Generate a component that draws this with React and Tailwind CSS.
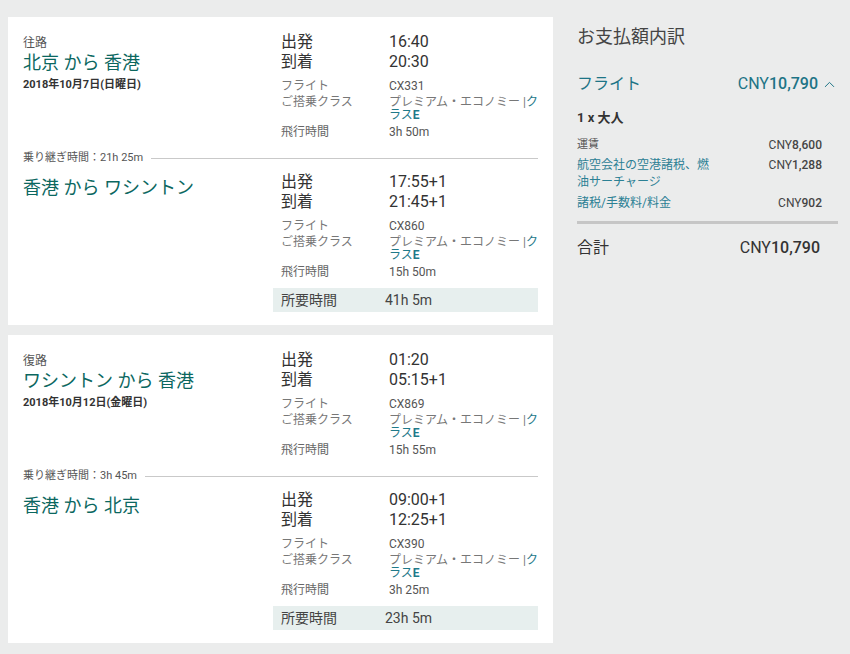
import { ChevronUp } from 'lucide-react';

const font = { fontFamily: 'Roboto, "Noto Sans CJK JP", sans-serif' };

function Details({ dep, arr, flight, time }) {
  return (
    <div className="w-[257px] text-[#333]">
      <div className="flex text-[16px] leading-[20px]">
        <span className="w-[108px]">出発</span>
        <span>{dep}</span>
      </div>
      <div className="flex text-[16px] leading-[20px]">
        <span className="w-[108px]">到着</span>
        <span>{arr}</span>
      </div>
      <div className="mt-[6px] flex text-[12px] leading-[16px] text-[#555]">
        <span className="w-[108px] text-[#777]">フライト</span>
        <span>{flight}</span>
      </div>
      <div className="mt-[2px] flex text-[12px] leading-[13px] text-[#555]">
        <span className="w-[108px] text-[#777]">ご搭乗クラス</span>
        <span className="whitespace-nowrap text-[#777]">
          プレミアム・エコノミー |<span className="text-[#1f7a8a]">ク</span>
          <br />
          <span className="text-[#1f7a8a]">
            ラス<b className="font-bold">E</b>
          </span>
        </span>
      </div>
      <div className="mt-[2px] flex text-[12px] leading-[16px] text-[#555]">
        <span className="w-[108px] text-[#666]">飛行時間</span>
        <span>{time}</span>
      </div>
    </div>
  );
}

function Card({ label, title1, date, seg1, layover, title2, seg2, total }) {
  return (
    <div className="bg-white px-[15px] pt-[15px] pb-[13px]">
      <div className="flex">
        <div className="flex-1 pt-[3px]">
          <div className="text-[12px] leading-[16px] text-[#555]">{label}</div>
          <div className="text-[18px] leading-[24px] text-[#0b675f]">{title1}</div>
          <div className="mt-[2px] text-[11px] leading-[16px] font-bold text-[#333]">{date}</div>
        </div>
        <Details {...seg1} />
      </div>

      <div className="mt-[10px] mb-[6px] flex items-center">
        <span className="text-[11px] leading-[16px] text-[#555]">乗り継ぎ時間：{layover}</span>
        <div className="ml-2 h-px flex-1 bg-[#c9c9c9]" />
      </div>

      <div className="flex">
        <div className="flex-1 pt-[4px] text-[18px] leading-[24px] text-[#0b675f]">{title2}</div>
        <div>
          <Details {...seg2} />
          <div className="mt-[8px] -ml-2 flex h-[24px] w-[265px] items-center bg-[#e7efee] px-2 text-[14px] text-[#444]">
            <span className="w-[104px]">所要時間</span>
            <span>{total}</span>
          </div>
        </div>
      </div>
    </div>
  );
}

function Summary() {
  return (
    <div className="mt-[8px] ml-[24px] w-[261px] text-[#333]">
      <div className="text-[18px] leading-[24px] text-[#444]">お支払額内訳</div>
      <div className="mt-[23px] flex items-center justify-between text-[16px] leading-[24px] text-[#1d7486]">
        <span>フライト</span>
        <span className="flex items-center">
          CNY<span className="font-medium">10,790</span>
          <ChevronUp size={17} strokeWidth={1.4} className="ml-[3px]" />
        </span>
      </div>
      <div className="mt-[12px] text-[13px] leading-[20px] font-bold text-[#333]">1 x 大人</div>
      <div className="pr-4 text-[12px]">
        <div className="mt-[9px] flex justify-between leading-[16px]">
          <span className="text-[11px] text-[#555]">運賃</span>
          <span className="text-[#444]">CNY<span className="font-medium">8,600</span></span>
        </div>
        <div className="mt-[4px] flex justify-between leading-[17px]">
          <span className="w-[140px] text-[#2b8094]">航空会社の空港諸税、燃油サーチャージ</span>
          <span className="text-[#444]">CNY<span className="font-medium">1,288</span></span>
        </div>
        <div className="mt-[4px] flex justify-between leading-[16px]">
          <span className="text-[#2b8094]">諸税/手数料/料金</span>
          <span className="text-[#444]">CNY<span className="font-medium">902</span></span>
        </div>
      </div>
      <div className="mt-[10px] h-[3px] bg-[#c6c6c6]" />
      <div className="mt-[12px] flex justify-between pr-[18px] text-[16px] leading-[24px] text-[#333]">
        <span>合計</span>
        <span>CNY<span className="font-medium">10,790</span></span>
      </div>
    </div>
  );
}

export default function App() {
  return (
    <div style={font} className="flex min-h-[654px] items-start bg-[#ebecec] pt-[17px] pl-[8px]">
      <div className="flex w-[545px] flex-col gap-[10px]">
        <Card
          label="往路"
          title1="北京 から 香港"
          date="2018年10月7日(日曜日)"
          seg1={{ dep: '16:40', arr: '20:30', flight: 'CX331', time: '3h 50m' }}
          layover="21h 25m"
          title2="香港 から ワシントン"
          seg2={{ dep: '17:55+1', arr: '21:45+1', flight: 'CX860', time: '15h 50m' }}
          total="41h 5m"
        />
        <Card
          label="復路"
          title1="ワシントン から 香港"
          date="2018年10月12日(金曜日)"
          seg1={{ dep: '01:20', arr: '05:15+1', flight: 'CX869', time: '15h 55m' }}
          layover="3h 45m"
          title2="香港 から 北京"
          seg2={{ dep: '09:00+1', arr: '12:25+1', flight: 'CX390', time: '3h 25m' }}
          total="23h 5m"
        />
      </div>
      <Summary />
    </div>
  );
}
